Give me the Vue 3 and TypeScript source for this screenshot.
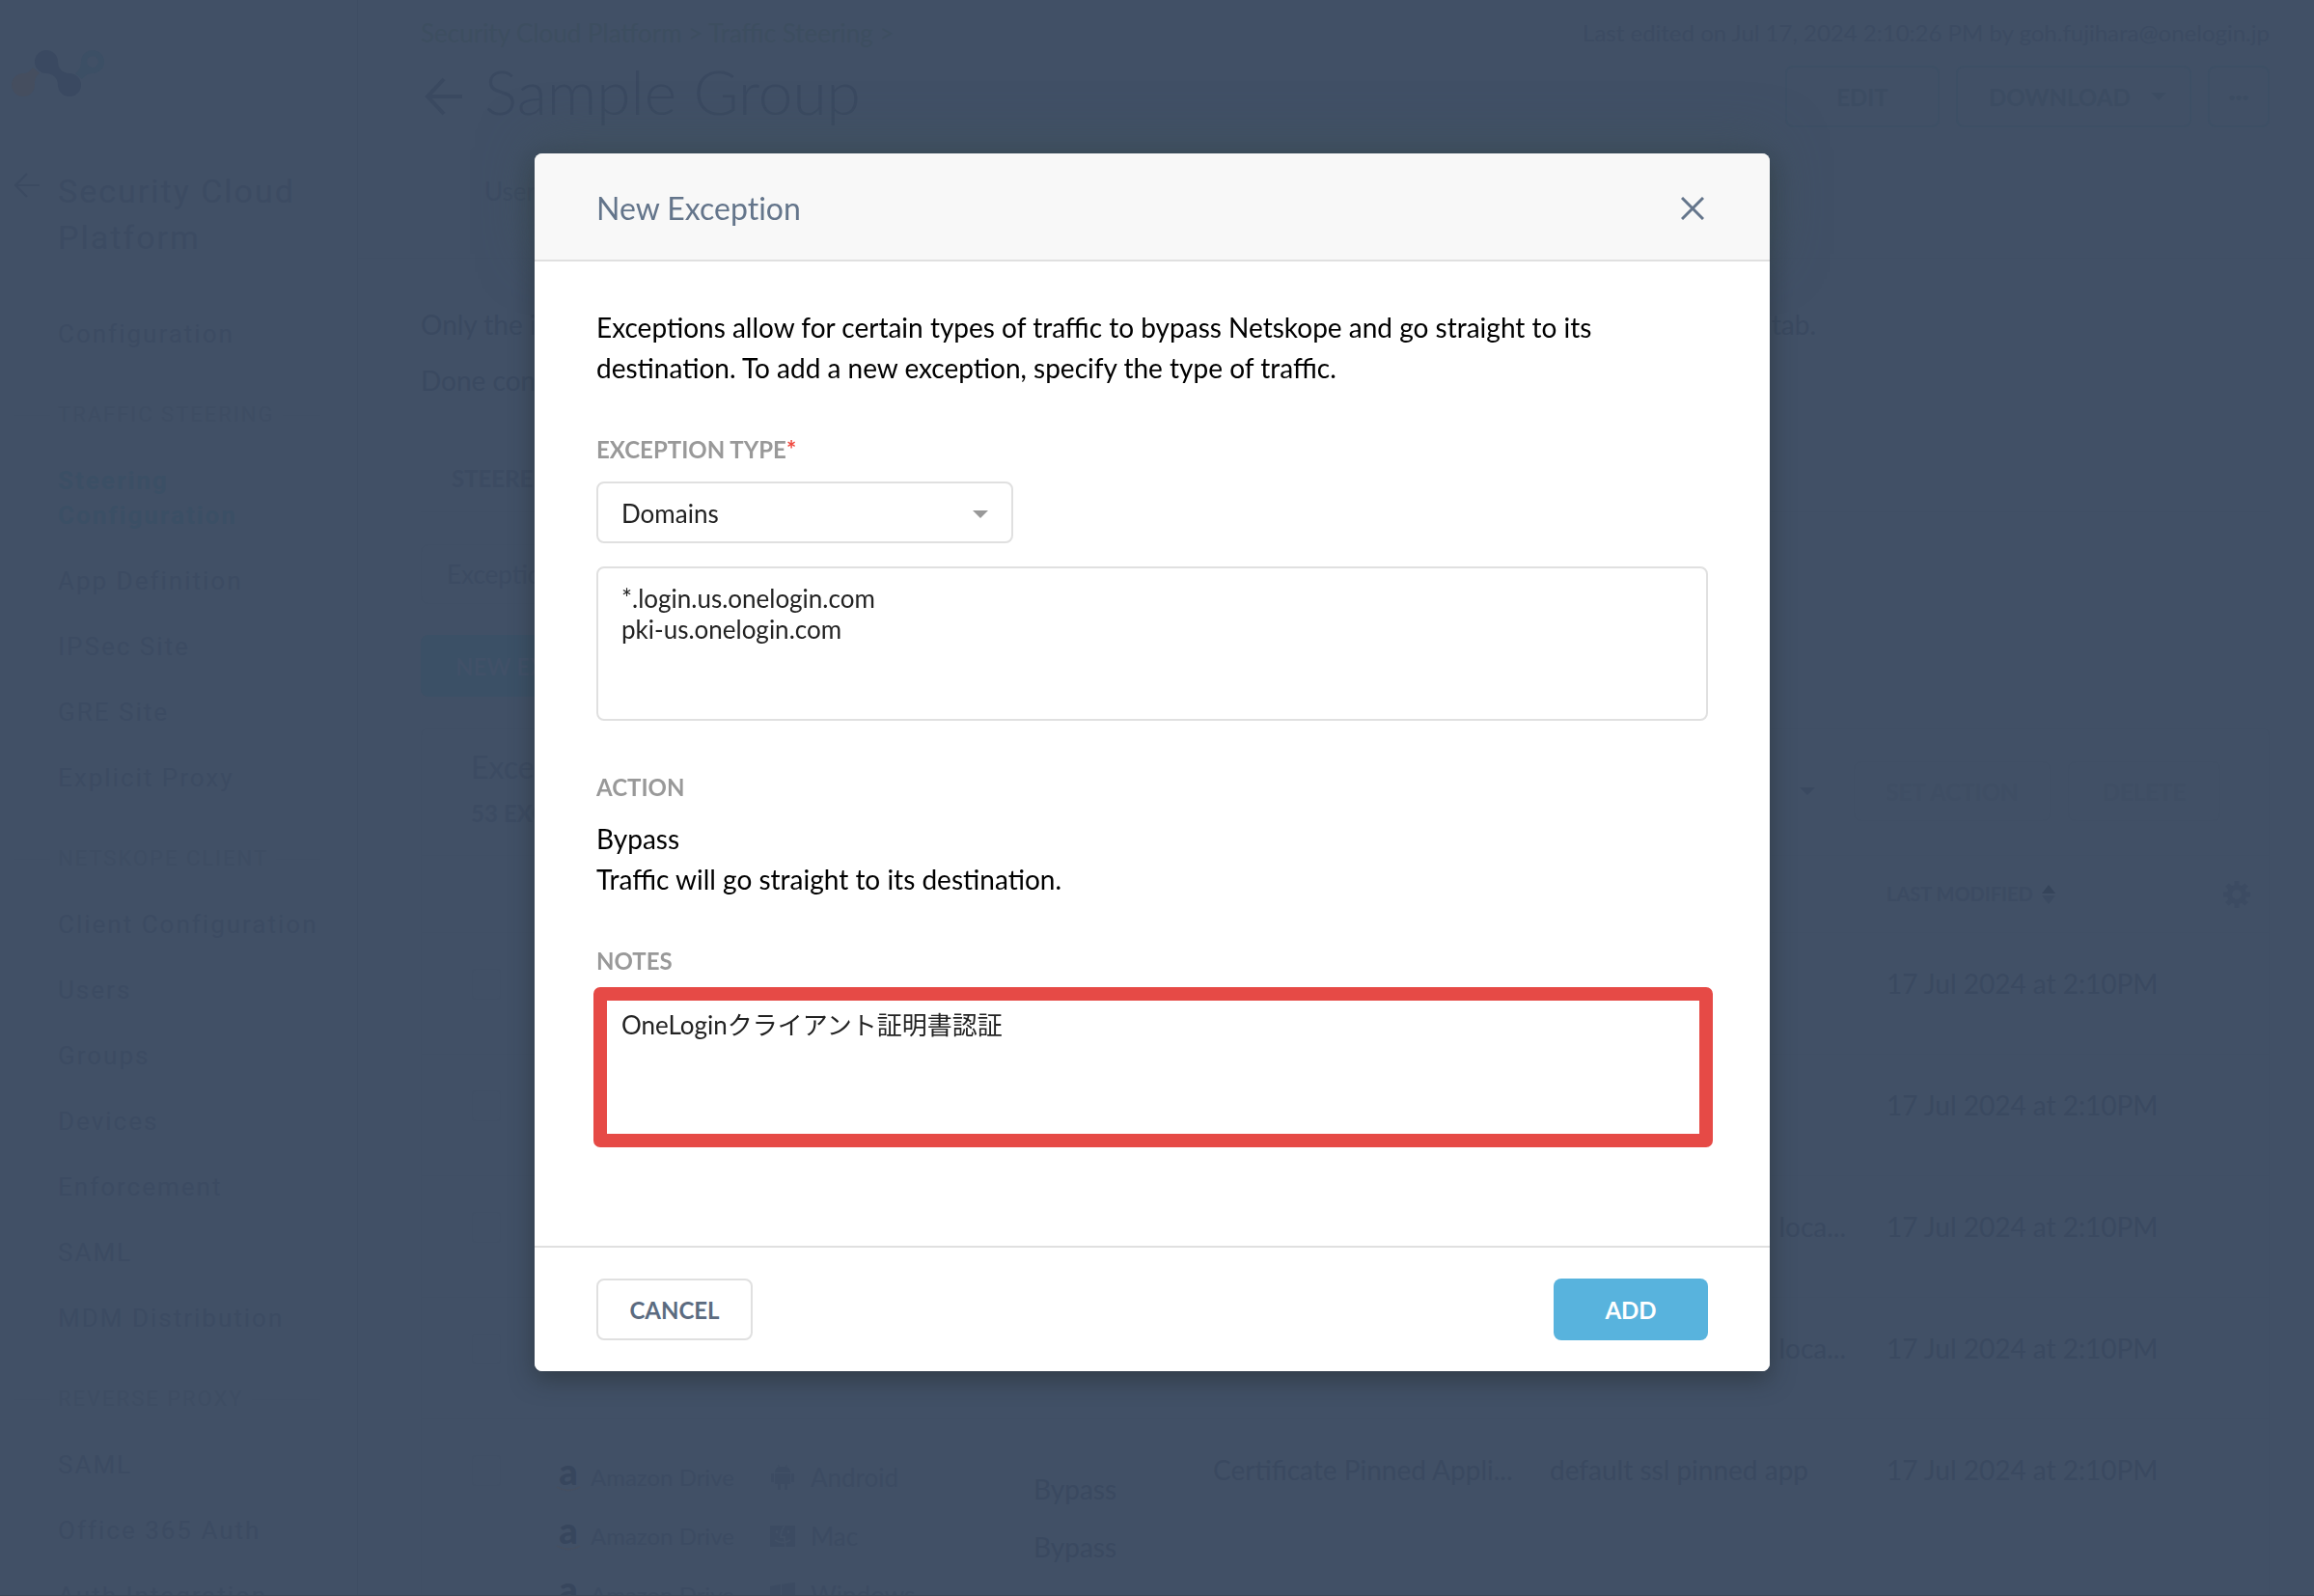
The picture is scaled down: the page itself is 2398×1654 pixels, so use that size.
<script setup lang="ts">
import { ref } from 'vue'

interface NavItem {
  label: string
  kind?: 'section' | 'active'
}

interface ExceptionRow {
  notes: string
  modified: string
}

interface AppEntry {
  platform: string
  icon: 'android' | 'mac' | 'windows'
}

const navItems: NavItem[] = [
  { label: 'Configuration' },
  { label: 'TRAFFIC STEERING', kind: 'section' },
  { label: 'Steering Configuration', kind: 'active' },
  { label: 'App Definition' },
  { label: 'IPSec Site' },
  { label: 'GRE Site' },
  { label: 'Explicit Proxy' },
  { label: 'NETSKOPE CLIENT', kind: 'section' },
  { label: 'Client Configuration' },
  { label: 'Users' },
  { label: 'Groups' },
  { label: 'Devices' },
  { label: 'Enforcement' },
  { label: 'SAML' },
  { label: 'MDM Distribution' },
  { label: 'REVERSE PROXY', kind: 'section' },
  { label: 'SAML' },
  { label: 'Office 365 Auth' },
  { label: 'Auth Integration' },
]

const modified = '17 Jul 2024 at 2:10PM'
const rows: ExceptionRow[] = [
  { notes: '', modified },
  { notes: '', modified },
  { notes: 'exception loca...', modified },
  { notes: 'exception loca...', modified },
]

const apps: AppEntry[] = [
  { platform: 'Android', icon: 'android' },
  { platform: 'Mac', icon: 'mac' },
  { platform: 'Windows', icon: 'windows' },
]

const open = ref(true)
const exceptionType = ref('Domains')
const domains = ref('*.login.us.onelogin.com\npki-us.onelogin.com')
const notes = ref('OneLoginクライアント証明書認証')
</script>

<template>
  <div class="app">
    <aside class="sidebar">
      <svg class="logo" viewBox="0 0 96 48" aria-hidden="true">
        <path class="logo-red" d="M12 24c4 0 6-1 10-6l7 6c-4 3-5 6-5 12a12 12 0 1 1-12-12z" />
        <path class="logo-navy" d="M36 0a12 12 0 0 1 12 12c0 7 5 12 12 12a12 12 0 1 1-12 12c0-7-5-12-12-12a12 12 0 0 1 0-24z" />
        <path class="logo-teal" fill-rule="evenodd" d="M84 0a12 12 0 1 1 0 24c-5 0-8 2-11 6l-7-6c5-4 6-7 6-12a12 12 0 0 1 12-12zm0 6a6 6 0 1 0 0 12a6 6 0 0 0 0-12z" />
      </svg>
      <div class="side-title">
        <svg viewBox="0 0 28 28" aria-hidden="true"><path d="M14 2L2 14l12 12M2 14h25" /></svg>
        <h2>Security Cloud Platform</h2>
      </div>
      <nav>
        <template v-for="(item, i) in navItems" :key="i">
          <div v-if="item.kind === 'section'" class="nav-section"><span>{{ item.label }}</span></div>
          <a v-else href="#" class="nav-item" :class="{ active: item.kind === 'active' }">{{ item.label }}</a>
        </template>
      </nav>
    </aside>

    <main class="main">
      <header class="page-head">
        <div class="crumb-row">
          <div class="crumbs">Security Cloud Platform &gt; Traffic Steering &gt;</div>
          <div class="edited">Last edited on Jul 17, 2024 2:10:26 PM by goh.fujihara@onelogin.jp</div>
        </div>
        <div class="title-row">
          <svg class="back" viewBox="0 0 40 40" aria-hidden="true"><path d="M20 2L3 20l17 18M3 20h36" /></svg>
          <h1>Sample Group</h1>
          <div class="head-actions">
            <button type="button" class="ghost edit">EDIT</button>
            <button type="button" class="ghost download">DOWNLOAD<i class="caret"></i></button>
            <button type="button" class="ghost more" aria-label="More">•••</button>
          </div>
        </div>
        <div class="meta">User</div>
      </header>

      <section class="content">
        <p class="intro"><span>Only the items</span><span>tab.</span></p>
        <p>Done configuring?</p>
        <div class="tabs">STEERED</div>
        <div class="filter">Exceptions</div>
        <button type="button" class="new-btn">NEW EXCEPTION</button>

        <div class="card">
          <div class="card-head">
            <div>
              <h3>Exceptions</h3>
              <div class="count">53 EXCEPTIONS</div>
            </div>
            <div class="card-actions">
              <i class="caret"></i>
              <button type="button" class="ghost faint set">SET ACTION</button>
              <button type="button" class="ghost faint delete">DELETE</button>
            </div>
          </div>
          <table>
            <colgroup>
              <col class="c-check" /><col class="c-name" /><col class="c-action" />
              <col /><col /><col /><col class="c-gear" />
            </colgroup>
            <thead>
              <tr>
                <th></th>
                <th></th>
                <th></th>
                <th></th>
                <th></th>
                <th>
                  LAST MODIFIED
                  <svg class="sort" viewBox="0 0 14 20" aria-hidden="true"><path d="M7 0l7 9H0z" /><path class="down" d="M7 20l7-9H0z" /></svg>
                </th>
                <th class="gear-cell">
                  <svg class="gear" viewBox="-14 -14 28 28" aria-hidden="true">
                    <circle r="7.5" />
                    <path d="M0-14v5M0 14v-5M-14 0h5M14 0h-5M-10-10l4 4M10-10l-4 4M-10 10l4-4M10 10l-4-4" />
                  </svg>
                </th>
              </tr>
            </thead>
            <tbody>
              <tr v-for="(row, i) in rows" :key="i">
                <td class="check"><input type="checkbox" aria-label="Select row" /></td>
                <td></td>
                <td></td>
                <td></td>
                <td class="notes-cell">{{ row.notes }}</td>
                <td>{{ row.modified }}</td>
                <td></td>
              </tr>
              <tr>
                <td class="check"><input type="checkbox" aria-label="Select row" /></td>
                <td class="apps">
                  <div v-for="app in apps" :key="app.platform" class="app-line">
                    <span class="amazon">a<svg viewBox="0 0 26 6" aria-hidden="true"><path d="M1 1q12 7 24 0" /></svg></span>
                    <span class="app-name">Amazon Drive</span>
                    <svg v-if="app.icon === 'android'" class="os" viewBox="0 0 26 26" aria-hidden="true">
                      <path d="M5 8a8 7 0 0 1 4-6L8 0h1l1 2h6l1-2h1l-1 2a8 7 0 0 1 4 6zM5 9h16v11h-3v6h-3v-6h-4v6H8v-6H5zM1 9h3v9H1zM22 9h3v9h-3z" />
                    </svg>
                    <svg v-else-if="app.icon === 'mac'" class="os" viewBox="0 0 26 26" aria-hidden="true">
                      <path d="M0 2h26v22H0z" />
                      <path class="face" d="M15 2q-4 6-4 12h4q0 5 1 10M7 7v3M19 7v3M5 17q8 5 16 0" />
                    </svg>
                    <svg v-else class="os" viewBox="0 0 26 26" aria-hidden="true">
                      <path d="M0 4l11-2v11H0zM12 2l14-2v13H12zM0 14h11v10L0 22zM12 14h14v12l-14-2z" />
                    </svg>
                    <span>{{ app.platform }}</span>
                  </div>
                </td>
                <td class="bypass"><div v-for="app in apps" :key="app.platform">Bypass</div></td>
                <td>Certificate Pinned Appli...</td>
                <td>default ssl pinned app</td>
                <td>{{ modified }}</td>
                <td></td>
              </tr>
            </tbody>
          </table>
        </div>
      </section>
    </main>

    <div v-if="open" class="overlay">
      <form class="modal" role="dialog" aria-labelledby="dialog-title" @submit.prevent>
        <header class="modal-head">
          <h2 id="dialog-title">New Exception</h2>
          <button type="button" class="close" aria-label="Close" @click="open = false">
            <svg viewBox="0 0 24 24" aria-hidden="true"><path d="M1 1l22 22M23 1L1 23" /></svg>
          </button>
        </header>
        <div class="modal-body">
          <p>Exceptions allow for certain types of traffic to bypass Netskope and go straight to its destination. To add a new exception, specify the type of traffic.</p>

          <label class="label" for="exception-type">EXCEPTION TYPE<span class="required">*</span></label>
          <div class="select">
            <select id="exception-type" v-model="exceptionType">
              <option>Domains</option>
            </select>
            <i class="caret"></i>
          </div>
          <textarea v-model="domains" aria-label="Domains" spellcheck="false"></textarea>

          <div class="label action-label">ACTION</div>
          <p>Bypass<br />Traffic will go straight to its destination.</p>

          <label class="label" for="notes">NOTES</label>
          <div class="notes">
            <textarea id="notes" v-model="notes" spellcheck="false"></textarea>
            <div class="highlight"></div>
          </div>
        </div>
        <footer class="modal-foot">
          <button type="button" class="cancel" @click="open = false">CANCEL</button>
          <button type="submit" class="add">ADD</button>
        </footer>
      </form>
    </div>
  </div>
</template>

<style>
body {
  background: #415066;
}
</style>

<style scoped>
* {
  box-sizing: border-box;
}

.app {
  --bg: #415066;
  --ink: #3a4960;
  --soft: #3c4b62;
  --faint: #3e4d63;
  --line: #404f65;
  display: flex;
  height: 100vh;
  overflow: hidden;
  background: var(--bg);
  color: var(--ink);
  font-family: Lato, "Noto Sans CJK JP", sans-serif;
  font-size: 28px;
  line-height: 42px;
}

h1, h2, h3, p {
  margin: 0;
  font-weight: 400;
}

button, select, textarea {
  font-family: inherit;
}

.caret {
  display: inline-block;
  border: 8px solid transparent;
  border-top-color: currentColor;
  border-bottom: 0;
}

/* Sidebar */
.sidebar {
  flex: 0 0 371px;
  padding: 52px 38px 0 12px;
  border-right: 1px solid var(--faint);
  color: var(--soft);
  font-family: Roboto, sans-serif;
  letter-spacing: 2px;
}

.logo {
  display: block;
  width: 96px;
  height: 48px;
}

.logo-red { fill: #454e5f; }
.logo-navy { fill: #3a4961; }
.logo-teal { fill: #3c4f65; }

.side-title {
  display: flex;
  margin-top: 74px;
  margin-bottom: 42px;
}

.side-title svg {
  flex: none;
  width: 28px;
  height: 28px;
  margin: 4px 20px 0 2px;
  fill: none;
  stroke: #3b4a61;
  stroke-width: 2;
}

.side-title h2 {
  margin-left: -2px;
  font-size: 34px;
  line-height: 48px;
}

.nav-item {
  display: block;
  width: 240px;
  margin-left: 48px;
  padding: 16px 0;
  color: inherit;
  font-size: 26px;
  line-height: 36px;
  text-decoration: none;
  white-space: nowrap;
}

.nav-item.active {
  color: #3b4f65;
  font-weight: 700;
  white-space: normal;
}

.nav-section {
  display: flex;
  align-items: center;
  gap: 8px;
  padding: 32px 0 16px 2px;
  color: var(--faint);
  font-size: 22px;
  line-height: 36px;
  white-space: nowrap;
}

.nav-section::before,
.nav-section::after {
  content: "";
  flex: 0 0 38px;
  height: 1px;
  background: var(--line);
}

.nav-section::after {
  flex: 1;
}

/* Page */
.main {
  flex: 1;
  min-width: 0;
}

.page-head {
  height: 268px;
  padding: 14px 46px 0 65px;
  border-bottom: 1px solid var(--line);
}

.crumb-row {
  display: flex;
  justify-content: space-between;
  line-height: 40px;
}

.crumbs {
  color: #3d4e60;
  font-size: 26px;
}

.edited {
  color: var(--soft);
  font-size: 24px;
}

.title-row {
  display: flex;
  align-items: center;
  height: 92px;
}

.back {
  width: 40px;
  height: 40px;
  margin: 0 22px 0 4px;
  fill: none;
  stroke: var(--ink);
  stroke-width: 4;
}

h1 {
  padding-bottom: 10px;
  font-size: 64px;
  font-weight: 300;
  line-height: 76px;
}

.head-actions {
  display: flex;
  gap: 17px;
  margin-left: auto;
}

.ghost {
  height: 64px;
  padding: 0;
  border: 2px solid #3d4f65;
  border-radius: 8px;
  background: none;
  color: #3c4c62;
  font-size: 24px;
  font-weight: 700;
}

.ghost.edit { width: 160px; }

.ghost.download {
  display: flex;
  align-items: center;
  justify-content: space-between;
  width: 244px;
  padding: 0 24px 0 32px;
}

.ghost.more {
  width: 64px;
  font-size: 12px;
}

.meta {
  padding: 32px 0 0 66px;
  color: var(--soft);
  font-size: 26px;
  line-height: 40px;
}

.content {
  padding: 47px 46px 0 65px;
}

.intro {
  display: flex;
  justify-content: space-between;
  max-width: 1446px;
  margin-bottom: 16px;
}

.tabs {
  margin-top: 65px;
  padding: 0 0 18px 32px;
  border-bottom: 1px solid var(--line);
  color: var(--soft);
  font-size: 24px;
  font-weight: 700;
  line-height: 32px;
}

.filter {
  width: 320px;
  margin: 33px 0 32px;
  padding: 9px 26px;
  border: 1px solid var(--line);
  border-radius: 8px;
  color: var(--soft);
  font-size: 26px;
}

.new-btn {
  display: block;
  height: 64px;
  margin-bottom: 32px;
  padding: 0 36px;
  border: 0;
  border-radius: 8px;
  background: #3b5066;
  color: #415168;
  font-size: 24px;
  font-weight: 700;
}

.card {
  border: 1px solid var(--line);
  border-radius: 8px;
}

.card-head {
  display: flex;
  justify-content: space-between;
  height: 131px;
  padding: 16px 50px 0 51px;
}

.card h3 {
  margin-bottom: 8px;
  color: #3c4b62;
  font-size: 32px;
  line-height: 48px;
}

.count {
  font-size: 24px;
  font-weight: 700;
  line-height: 32px;
  color: #3c4b62;
}

.card-actions {
  display: flex;
  align-items: center;
  gap: 18px;
  height: 98px;
}

.card-actions .caret {
  margin-right: 22px;
}

.ghost.faint {
  height: 62px;
  border-width: 1px;
  border-color: var(--line);
  color: #3f4e64;
}

.ghost.set { width: 204px; }
.ghost.delete { width: 158px; }

table {
  width: 100%;
  border-collapse: collapse;
  table-layout: fixed;
}

.c-check { width: 122px; }
.c-name { width: 492px; }
.c-action { width: 186px; }
.c-gear { width: 67px; }

th {
  height: 80px;
  padding: 0 20px 2px;
  border-top: 1px solid var(--line);
  color: var(--soft);
  font-size: 20px;
  font-weight: 700;
  text-align: left;
  white-space: nowrap;
}

.sort {
  width: 14px;
  height: 20px;
  margin-left: 4px;
  vertical-align: -3px;
  fill: #35445a;
}

.sort .down { fill: #3b4a61; }

th.gear-cell {
  padding: 0 0 4px;
  text-align: center;
}

.gear {
  width: 28px;
  height: 28px;
  vertical-align: middle;
  fill: none;
  stroke: var(--soft);
  stroke-width: 5;
}

td {
  height: 126px;
  padding: 31px 0 0 20px;
  border-top: 1px solid var(--line);
  vertical-align: top;
  white-space: nowrap;
}

.notes-cell {
  padding-right: 22px;
  text-align: right;
}

td.check {
  padding: 37px 0 0 52px;
  line-height: 0;
}

.check input {
  width: 30px;
  height: 32px;
  margin: 0;
  border: 1px solid var(--line);
  border-radius: 4px;
  appearance: none;
}

td.apps {
  padding-top: 29px;
  color: #3c4b62;
  font-size: 26px;
  line-height: 60px;
}

.app-line {
  display: flex;
  align-items: center;
  height: 61px;
}

.amazon {
  display: flex;
  flex-direction: column;
  align-items: center;
  width: 26px;
  margin: 0 10px 6px -3px;
  color: #37465d;
  font-size: 38px;
  font-weight: 900;
  line-height: 28px;
}

.amazon svg {
  width: 26px;
  height: 6px;
  margin-top: 2px;
  fill: none;
  stroke: #454f60;
  stroke-width: 2;
}

.app-name {
  width: 186px;
  font-size: 24px;
}

.os {
  width: 26px;
  height: 26px;
  margin-right: 16px;
  fill: var(--soft);
}

.os .face {
  fill: none;
  stroke: var(--bg);
  stroke-width: 2;
}

td.bypass {
  padding-top: 42px;
  line-height: 60px;
}

/* Dialog */
.overlay {
  position: fixed;
  inset: 0;
  display: flex;
  align-items: flex-start;
  justify-content: center;
  padding: 159px 10px 0 0;
  border-bottom: 1px solid #3b4858;
}

.modal {
  width: min(1280px, calc(100% - 64px));
  border-radius: 8px;
  background: #fff;
  box-shadow: 0 8px 24px rgba(32, 40, 40, 0.5);
  color: #000;
}

.modal-head {
  display: flex;
  align-items: center;
  justify-content: space-between;
  height: 112px;
  padding: 4px 64px 0;
  border-bottom: 2px solid #e0e0e0;
  border-radius: 8px 8px 0 0;
  background: #f8f8f8;
  box-shadow: 0 -8px 56px rgba(62, 80, 86, 0.6);
}

.modal-head h2 {
  color: #64758b;
  font-size: 32px;
  line-height: 48px;
  font-variant-ligatures: none;
}

.close {
  width: 32px;
  height: 32px;
  padding: 4px;
  border: 0;
  background: none;
}

.close svg {
  display: block;
  width: 24px;
  height: 24px;
  fill: none;
  stroke: #64758b;
  stroke-width: 3;
}

.modal-body {
  position: relative;
  padding: 47px 64px 102px;
  background: #fff;
}

.label {
  display: block;
  margin: 48px 0 17px;
  color: #999;
  font-size: 24px;
  font-weight: 700;
  line-height: 32px;
}

.label.action-label {
  margin: 53px 0 16px;
}

.required {
  color: #f0483e;
}

.select {
  display: flex;
  align-items: center;
  width: 432px;
  height: 64px;
  margin-bottom: 24px;
  padding-right: 24px;
  border: 2px solid #e0e0e0;
  border-radius: 8px;
}

.select select {
  flex: 1;
  height: 100%;
  padding: 2px 24px 0;
  border: 0;
  background: none;
  color: #222;
  font-size: 26px;
  appearance: none;
}

.select .caret {
  margin-top: 4px;
  color: #999;
}

textarea {
  display: block;
  width: 100%;
  height: 160px;
  padding: 15px 24px;
  border: 2px solid #e0e0e0;
  border-radius: 8px;
  background: #fff;
  color: #222;
  font-size: 26px;
  line-height: 32px;
  resize: none;
}

.notes {
  position: relative;
}

.highlight {
  position: absolute;
  inset: -6px -5px 0 -3px;
  border: 14px solid #e64a46;
  border-radius: 7px;
  pointer-events: none;
}

.modal-foot {
  position: relative;
  display: flex;
  justify-content: space-between;
  padding: 32px 64px;
  border-top: 2px solid #e0e0e0;
  border-radius: 0 0 8px 8px;
  background: #fff;
}

.modal-foot button {
  height: 64px;
  padding: 0;
  border-radius: 8px;
  font-size: 24px;
  font-weight: 700;
}

.cancel {
  width: 162px;
  border: 2px solid #e0e0e0;
  background: #fff;
  color: #5b6b80;
}

.add {
  width: 160px;
  border: 0;
  background: #58b3dd;
  color: #fff;
}
</style>
